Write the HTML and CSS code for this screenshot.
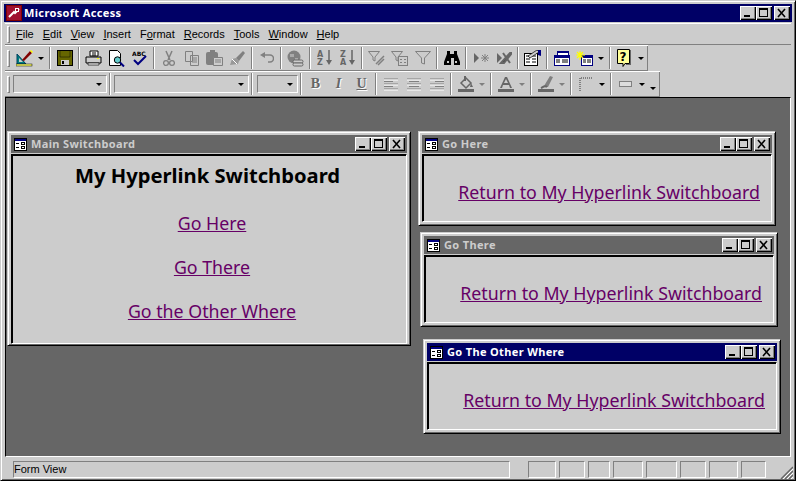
FILE: index.html
```html
<!DOCTYPE html>
<html lang="en">
<head>
    <meta charset="UTF-8">
    <title>Microsoft Access</title>
    <link rel="stylesheet" href="styles.css">
</head>
<body>
    <svg class="defs" width="0" height="0">
        <symbol id="form-icon" viewBox="0 0 13 13">
            <rect x="0" y="0" width="13" height="13" fill="#000"/>
            <rect x="1" y="1" width="11" height="2" fill="#000080"/>
            <rect x="1" y="3" width="11" height="9" fill="#fff"/>
            <path d="M2 5h3v1H2zM2 9h3v1H2z" fill="#000"/>
            <path d="M7 4h4v3H7zM7 8h4v3H7z" fill="#000"/>
            <path d="M8 5h2v1H8zM8 9h2v1H8z" fill="#fff"/>
        </symbol>
        <symbol id="min-glyph" viewBox="0 0 16 14"><rect x="4" y="9" width="6" height="2" fill="#000"/></symbol>
        <symbol id="max-glyph" viewBox="0 0 16 14"><path d="M3 2h9v9H3z M4 4v6h7V4z" fill="#000" fill-rule="evenodd"/></symbol>
        <symbol id="close-glyph" viewBox="0 0 16 14"><path d="M4 3l7 8M11 3l-7 8" stroke="#000" stroke-width="1.6" fill="none"/></symbol>
    </svg>

    <div class="app">
        <div class="titlebar active main-title">
            <svg class="app-icon" width="16" height="16" viewBox="0 0 16 16">
                <rect width="16" height="16" fill="#800000"/>
                <rect x="1" y="1" width="14" height="14" fill="#a01030"/>
                <path d="M3 12l5-5 1 1 4-4" stroke="#fff" stroke-width="2" fill="none"/>
                <rect x="9" y="3" width="4" height="4" fill="#fff"/>
                <rect x="10" y="4" width="2" height="2" fill="#a01030"/>
            </svg>
            <span class="title-text">Microsoft Access</span>
            <div class="caption-btns">
                <button class="cap"><svg width="16" height="14"><use href="#min-glyph"/></svg></button>
                <button class="cap"><svg width="16" height="14"><use href="#max-glyph"/></svg></button>
                <button class="cap close"><svg width="16" height="14"><use href="#close-glyph"/></svg></button>
            </div>
        </div>

        <div class="bar menubar">
            <span class="grip"></span>
            <span class="menu-item"><u>F</u>ile</span>
            <span class="menu-item"><u>E</u>dit</span>
            <span class="menu-item"><u>V</u>iew</span>
            <span class="menu-item"><u>I</u>nsert</span>
            <span class="menu-item">F<u>o</u>rmat</span>
            <span class="menu-item"><u>R</u>ecords</span>
            <span class="menu-item"><u>T</u>ools</span>
            <span class="menu-item"><u>W</u>indow</span>
            <span class="menu-item"><u>H</u>elp</span>
        </div>

        <div class="bar toolbar row-one">
            <span class="grip"></span>
            <span class="btn"><svg width="18" height="18" viewBox="0 0 18 18"><path d="M1 15L1 5l9 10z" fill="#008080" stroke="#004060"/><path d="M3 13V9l4 4z" fill="#ccc"/><rect x="0" y="15" width="16" height="2" fill="#ffff66" stroke="#000" stroke-width=".5"/><path d="M6 11l8-9 2 2-8 8z" fill="#800000"/><path d="M14 2l1-1 2 2-1 1z" fill="#ff0"/></svg></span>
            <span class="arrow"></span>
            <span class="sep"></span>
            <span class="btn"><svg width="16" height="16" viewBox="0 0 16 16"><rect x=".5" y=".5" width="15" height="15" fill="#666600" stroke="#000"/><path d="M3 1v6h10V1" fill="none" stroke="#000" stroke-opacity=".45"/><rect x="4" y="10" width="8" height="5" fill="#ccc"/><rect x="5" y="11" width="2" height="3" fill="#000"/></svg></span>
            <span class="sep"></span>
            <span class="btn"><svg width="17" height="16" viewBox="0 0 17 16"><path d="M5 1h8v5H5z" fill="#fff" stroke="#000"/><path d="M1 7h15v6H1z" fill="#ccc" stroke="#000"/><path d="M3 13h11v2H3z" fill="#fff" stroke="#000" stroke-width=".7"/><path d="M7 3h4M7 5h4" stroke="#000"/><rect x="12" y="8" width="2" height="1" fill="#ff0"/></svg></span>
            <span class="btn"><svg width="17" height="17" viewBox="0 0 17 17"><path d="M1.500.5h8l3 3v12h-11z" fill="#fff" stroke="#000"/><circle cx="9.500" cy="10" r="3.200" fill="#66cccc" stroke="#000"/><path d="M12 12.500l4 4" stroke="#000080" stroke-width="2"/></svg></span>
            <span class="btn"><svg width="16" height="16" viewBox="0 0 16 16"><text class="abc" x="0" y="6">ABC</text><path d="M2 10l4 4 8-8" stroke="#000080" stroke-width="2" fill="none"/></svg></span>
            <span class="sep"></span>
            <span class="btn"><svg width="12" height="17" viewBox="0 0 12 17"><path d="M3 1l4 9M9 1L5 10" stroke="#808080" stroke-width="1.500"/><circle cx="3" cy="13" r="2.400" fill="none" stroke="#808080" stroke-width="1.300"/><circle cx="9" cy="13" r="2.400" fill="none" stroke="#808080" stroke-width="1.300"/></svg></span>
            <span class="btn"><svg width="16" height="15" viewBox="0 0 16 15"><path d="M1.500.5h7v10h-7zM6.500 4.500h8v10h-8z" fill="#ccc" stroke="#808080"/><path d="M8 7h5M8 9h5M8 11h5" stroke="#808080"/></svg></span>
            <span class="btn"><svg width="17" height="16" viewBox="0 0 17 16"><rect x="0" y="2" width="12" height="13" rx="2" fill="#808080"/><rect x="4" y="0" width="5" height="3" fill="#808080"/><path d="M7.500 7.500h9v8h-9z" fill="#ccc" stroke="#808080"/><path d="M9 10h6M9 12h6" stroke="#808080"/></svg></span>
            <span class="btn"><svg width="17" height="16" viewBox="0 0 17 16"><path d="M1 15l2-6 4-1 3 3-1 3z" fill="#999"/><path d="M7 8l7-7 2 2-6 8z" fill="#808080"/><path d="M3 9l5 5" stroke="#fff"/></svg></span>
            <span class="sep"></span>
            <span class="btn"><svg width="14" height="12" viewBox="0 0 14 12"><path d="M4 3h6a3 3 0 0 1 0 7H8" fill="none" stroke="#808080" stroke-width="1.500"/><path d="M0 3l5-3v6z" fill="#808080"/></svg></span>
            <span class="sep"></span>
            <span class="btn"><svg width="17" height="17" viewBox="0 0 17 17"><circle cx="7" cy="7" r="6.500" fill="#808080"/><path d="M3 4h4v3H3zM8 8h3v3H8z" fill="#aaa"/><rect x="6" y="10" width="10" height="3" rx="1.500" fill="#ccc" stroke="#666"/><rect x="6" y="13" width="10" height="3" rx="1.500" fill="#ccc" stroke="#666"/></svg></span>
            <span class="sep"></span>
            <span class="btn"><svg width="16" height="16" viewBox="0 0 16 16"><text class="sort" x="0" y="7">A</text><text class="sort" x="0" y="15">Z</text><path d="M12 0v10" stroke="#666" stroke-width="1.500"/><path d="M9 10h6l-3 5z" fill="#666"/></svg></span>
            <span class="btn"><svg width="16" height="16" viewBox="0 0 16 16"><text class="sort" x="0" y="7">Z</text><text class="sort" x="0" y="15">A</text><path d="M12 0v10" stroke="#666" stroke-width="1.500"/><path d="M9 10h6l-3 5z" fill="#666"/></svg></span>
            <span class="sep"></span>
            <span class="btn"><svg width="17" height="15" viewBox="0 0 17 15"><path d="M.5.5h11L7 6v4L5 9V6z" fill="#ccc" stroke="#808080"/><path d="M8 13l8-8M10 14l6-6" stroke="#808080" stroke-width="1.500"/></svg></span>
            <span class="btn"><svg width="17" height="15" viewBox="0 0 17 15"><path d="M.5.5h11L7 6v4L5 9V6z" fill="#ccc" stroke="#808080"/><rect x="7.500" y="5.500" width="9" height="9" fill="#ccc" stroke="#808080"/><path d="M9 8h2v1H9zM13 8h2v1h-2zM9 11h2v1H9zM13 11h2v1h-2z" fill="#808080"/></svg></span>
            <span class="btn"><svg width="16" height="14" viewBox="0 0 16 14"><path d="M.5.5h15L9.500 7v6l-3-1V7z" fill="#ccc" stroke="#808080"/></svg></span>
            <span class="sep"></span>
            <span class="btn"><svg width="16" height="14" viewBox="0 0 16 14"><path d="M3 0h3v3h4V0h3v3l3 8v3h-6V7H9H7v7H0v-3l3-8z" fill="#000"/><path d="M3 10h2v2H3zM11 10h2v2h-2z" fill="#ccc"/></svg></span>
            <span class="sep"></span>
            <span class="btn"><svg width="16" height="12" viewBox="0 0 16 12"><path d="M1 1l5 5-5 5z" fill="#666"/><path d="M12 2v8M8 6h8M9 3l6 6M15 3l-6 6" stroke="#808080"/></svg></span>
            <span class="btn"><svg width="16" height="12" viewBox="0 0 16 12"><path d="M1 1l5 5-5 5z" fill="#666"/><path d="M5 11L14 1h2L8 11zM7 1l7 10" stroke="#666" stroke-width="2"/></svg></span>
            <span class="sep"></span>
            <span class="btn"><svg width="18" height="16" viewBox="0 0 18 16"><rect x=".5" y="3.500" width="13" height="12" fill="#fff" stroke="#000"/><path d="M2 6h4M8 6h4M2 9h4M8 9h4M2 12h4M8 12h4" stroke="#000"/><path d="M4 6l9-6 2 2-9 6z" fill="#ccc" stroke="#000" stroke-width=".7"/><path d="M14 0h3v6l-3-1z" fill="#000080"/></svg></span>
            <span class="sep"></span>
            <span class="btn"><svg width="16" height="15" viewBox="0 0 16 15"><path d="M3.500.5h11v4h-11z" fill="#fff" stroke="#000080"/><rect x="3" y="0" width="12" height="2" fill="#000080"/><rect x="0" y="4" width="16" height="11" fill="#000080"/><rect x="1" y="7" width="14" height="7" fill="#fff"/><path d="M2 9h4M8 9h6M2 11h4M8 11h6" stroke="#000"/></svg></span>
            <span class="btn"><svg width="17" height="15" viewBox="0 0 17 15"><rect x="5" y="4" width="12" height="11" fill="#000080"/><rect x="6" y="7" width="10" height="7" fill="#fff"/><path d="M7 9h3M11 9h4M7 11h3M11 11h4" stroke="#000"/><path d="M4 0v9M0 4h9M1 1l6 6M7 1L1 7" stroke="#ffff00" stroke-width="1.200"/></svg></span>
            <span class="arrow"></span>
            <span class="sep"></span>
            <span class="btn"><svg width="15" height="18" viewBox="0 0 15 18"><path d="M.5.5h12v14H8l-2 3v-3H.5z" fill="#ffff99" stroke="#000"/><path d="M13 1h1v15H9v-1h4z" fill="#666"/><text class="help" x="2.500" y="12">?</text></svg></span>
            <span class="arrow"></span>
        </div>

        <div class="bar toolbar row-two">
            <span class="grip"></span>
            <span class="combo font-style"><span class="arrow inner"></span></span>
            <span class="sep"></span>
            <span class="combo font-name"><span class="arrow inner"></span></span>
            <span class="sep"></span>
            <span class="combo font-size"><span class="arrow inner"></span></span>
            <span class="sep"></span>
            <span class="btn fmt"><b class="fmt-b">B</b></span>
            <span class="btn fmt"><i class="fmt-i">I</i></span>
            <span class="btn fmt"><u class="fmt-u">U</u></span>
            <span class="sep"></span>
            <span class="btn"><svg width="16" height="13" viewBox="0 0 16 13"><path d="M1 1h14M1 3.500h9M1 6h14M1 8.500h9M1 11h14" stroke="#808080"/><path d="M1 2h14M1 7h14M1 12h14" stroke="#fff"/></svg></span>
            <span class="btn"><svg width="16" height="13" viewBox="0 0 16 13"><path d="M1 1h14M3 3.500h10M1 6h14M3 8.500h10M1 11h14" stroke="#808080"/><path d="M1 2h14M1 7h14M1 12h14" stroke="#fff"/></svg></span>
            <span class="btn"><svg width="16" height="13" viewBox="0 0 16 13"><path d="M1 1h14M6 3.500h9M1 6h14M6 8.500h9M1 11h14" stroke="#808080"/><path d="M1 2h14M1 7h14M1 12h14" stroke="#fff"/></svg></span>
            <span class="sep"></span>
            <span class="btn"><svg width="16" height="16" viewBox="0 0 16 16"><path d="M3 7l5-5 5 5-5 5z" fill="#ccc" stroke="#666" stroke-width="1.500"/><path d="M6 0h2v5H6z" fill="#666"/><path d="M13 7l2 4h-3z" fill="#666"/><rect x="0" y="13" width="16" height="3" fill="#666"/></svg></span>
            <span class="arrow off"></span>
            <span class="sep"></span>
            <span class="btn"><svg width="16" height="16" viewBox="0 0 16 16"><path d="M2 12L7 1h2l5 11h-2l-1-3H5l-1 3zM6 7h4L8 3z" fill="#666" fill-rule="evenodd"/><rect x="0" y="13" width="16" height="3" fill="#666"/></svg></span>
            <span class="arrow off"></span>
            <span class="sep"></span>
            <span class="btn"><svg width="16" height="16" viewBox="0 0 16 16"><path d="M6 10l6-10 3 1-5 10z" fill="#808080"/><path d="M3 12c2-1 4-3 6-1" stroke="#666" stroke-width="2" fill="none"/><rect x="0" y="13" width="16" height="3" fill="#666"/></svg></span>
            <span class="arrow off"></span>
            <span class="sep"></span>
            <span class="btn"><svg width="14" height="14" viewBox="0 0 14 14"><path d="M1 14V1h13" fill="none" stroke="#808080" stroke-dasharray="1 1" stroke-width="2"/></svg></span>
            <span class="arrow"></span>
            <span class="sep"></span>
            <span class="btn"><svg width="13" height="6" viewBox="0 0 13 6"><rect x=".5" y=".5" width="12" height="5" fill="#ddd" stroke="#808080"/></svg></span>
            <span class="arrow"></span>
            <span class="arrow low"></span>
        </div>

        <div class="workspace">
            <section class="win main-win">
                <div class="titlebar">
                    <svg class="form-icon" width="13" height="13"><use href="#form-icon"/></svg>
                    <span class="title-text">Main Switchboard</span>
                    <div class="caption-btns">
                        <button class="cap"><svg width="16" height="14"><use href="#min-glyph"/></svg></button>
                        <button class="cap"><svg width="16" height="14"><use href="#max-glyph"/></svg></button>
                        <button class="cap close"><svg width="16" height="14"><use href="#close-glyph"/></svg></button>
                    </div>
                </div>
                <div class="win-body switchboard">
                    <h1>My Hyperlink Switchboard</h1>
                    <a href="#">Go Here</a>
                    <a href="#">Go There</a>
                    <a href="#">Go the Other Where</a>
                </div>
            </section>

            <section class="win here-win">
                <div class="titlebar">
                    <svg class="form-icon" width="13" height="13"><use href="#form-icon"/></svg>
                    <span class="title-text">Go Here</span>
                    <div class="caption-btns">
                        <button class="cap"><svg width="16" height="14"><use href="#min-glyph"/></svg></button>
                        <button class="cap"><svg width="16" height="14"><use href="#max-glyph"/></svg></button>
                        <button class="cap close"><svg width="16" height="14"><use href="#close-glyph"/></svg></button>
                    </div>
                </div>
                <div class="win-body return"><a href="#">Return to My Hyperlink Switchboard</a></div>
            </section>

            <section class="win there-win">
                <div class="titlebar">
                    <svg class="form-icon" width="13" height="13"><use href="#form-icon"/></svg>
                    <span class="title-text">Go There</span>
                    <div class="caption-btns">
                        <button class="cap"><svg width="16" height="14"><use href="#min-glyph"/></svg></button>
                        <button class="cap"><svg width="16" height="14"><use href="#max-glyph"/></svg></button>
                        <button class="cap close"><svg width="16" height="14"><use href="#close-glyph"/></svg></button>
                    </div>
                </div>
                <div class="win-body return"><a href="#">Return to My Hyperlink Switchboard</a></div>
            </section>

            <section class="win other-win">
                <div class="titlebar active">
                    <svg class="form-icon" width="13" height="13"><use href="#form-icon"/></svg>
                    <span class="title-text">Go The Other Where</span>
                    <div class="caption-btns">
                        <button class="cap"><svg width="16" height="14"><use href="#min-glyph"/></svg></button>
                        <button class="cap"><svg width="16" height="14"><use href="#max-glyph"/></svg></button>
                        <button class="cap close"><svg width="16" height="14"><use href="#close-glyph"/></svg></button>
                    </div>
                </div>
                <div class="win-body return"><a href="#">Return to My Hyperlink Switchboard</a></div>
            </section>
        </div>

        <div class="statusbar">
            <span class="panel status-text">Form View</span>
            <span class="panel p28"></span>
            <span class="panel p26"></span>
            <span class="panel p22"></span>
            <span class="panel p30"></span>
            <span class="panel p31"></span>
            <span class="panel p26"></span>
            <span class="panel p29"></span>
            <span class="panel p25"></span>
            <svg class="size-grip" width="13" height="13" viewBox="0 0 13 13"><path d="M13 1L1 13M13 5l-8 8M13 9l-4 4" stroke="#666" stroke-width="1.500"/><path d="M13 3L3 13M13 7l-6 6M13 11l-2 2" stroke="#fff"/></svg>
        </div>
    </div>
</body>
</html>
```

FILE: styles.css
```css
html, body {
    margin: 0;
    padding: 0;
    height: 100%;
    overflow: hidden;
    background: #ccc;
    font-family: "Noto Sans", sans-serif;
    font-size: 11px;
    color: #000;
}

.defs {
    position: absolute;
}

.app {
    box-sizing: border-box;
    width: 796px;
    height: 481px;
    padding: 2px 4px 0 4px;
    display: flex;
    flex-direction: column;
    background: #ccc;
    border: 1px solid;
    border-color: #ccc #000 #000 #ccc;
    box-shadow: inset 1px 1px 0 #fff, inset -1px -1px 0 #666;
}

/* title bars */
.titlebar {
    height: 18px;
    flex: none;
    display: flex;
    align-items: center;
    background: #666;
    color: #ccc;
    font-weight: bold;
    font-size: 11px;
    padding: 0 2px;
}

.titlebar.active {
    background: #006;
    color: #fff;
}

.title-text {
    letter-spacing: .35px;
    margin-bottom: 2px;
}

.main-title {
    margin: 1px -1px 1px -1px;
}

.app-icon {
    margin-right: 2px;
}

.form-icon {
    margin: 0 4px 0 1px;
}

.caption-btns {
    margin-left: auto;
    display: flex;
}

.cap {
    box-sizing: border-box;
    width: 16px;
    height: 14px;
    padding: 0;
    border: 0;
    background: #ccc;
    box-shadow: inset 1px 1px 0 #fff, inset -1px -1px 0 #000, inset -2px -2px 0 #808080;
    display: block;
}

.cap svg {
    display: block;
}

.cap.close {
    margin-left: 2px;
}

/* menu and toolbars */
.bar {
    display: flex;
    align-items: center;
    flex: none;
    box-sizing: border-box;
    border-top: 1px solid #fff;
    border-bottom: 1px solid #808080;
}

.menubar {
    height: 22px;
    padding-left: 2px;
}

.menu-item {
    margin-right: 9px;
    font-family: "Liberation Sans", sans-serif;
    font-size: 11px;
}

.grip {
    box-sizing: border-box;
    width: 3px;
    height: 17px;
    border: 1px solid;
    border-color: #fff #808080 #808080 #fff;
    margin-right: 3px;
    flex: none;
}

.menubar .grip {
    margin-right: 6px;
}

.toolbar {
    height: 26px;
    padding-left: 2px;
    box-shadow: inset -1px 0 0 #808080;
}

.row-one {
    width: 643px;
}

.row-two {
    width: 655px;
}

.btn {
    width: 23px;
    height: 22px;
    flex: none;
    display: flex;
    align-items: center;
    justify-content: center;
}

.arrow {
    width: 11px;
    height: 12px;
    flex: none;
    position: relative;
}

.arrow::after {
    content: "";
    position: absolute;
    left: 2px;
    top: 5px;
    border-style: solid;
    border-width: 3px 3.500px 0;
    border-color: #000 transparent transparent;
}

.arrow.off::after {
    border-top-color: #808080;
}

.arrow.low::after {
    top: 9px;
}

.sep {
    box-sizing: border-box;
    width: 2px;
    height: 22px;
    margin: 0 2px;
    flex: none;
    border-left: 1px solid #808080;
    border-right: 1px solid #fff;
}

.combo {
    box-sizing: border-box;
    height: 18px;
    flex: none;
    border: 1px solid;
    border-color: #808080 #fff #fff #808080;
    position: relative;
}

.combo .inner {
    position: absolute;
    right: 1px;
    top: 2px;
}

.font-style {
    width: 94px;
}

.font-name {
    width: 135px;
    margin-left: 1px;
}

.font-size {
    width: 41px;
    margin-left: 2px;
}

.fmt {
    font-family: "Liberation Serif", serif;
    font-size: 14px;
    color: #666;
    font-weight: bold;
    text-shadow: 1px 1px 0 #fff;
}

.abc {
    font: bold 6px "DejaVu Sans", sans-serif;
    fill: #000;
}

.sort {
    font: bold 8px "DejaVu Sans", sans-serif;
    fill: #666;
}

.help {
    font: bold 12px "DejaVu Sans", sans-serif;
    fill: #000;
}

/* the document area */
.workspace {
    flex: 1;
    position: relative;
    background: #666;
    border: 1px solid;
    border-color: #000 #fff #fff #000;
}

.win {
    position: absolute;
    box-sizing: border-box;
    display: flex;
    flex-direction: column;
    padding: 3px;
    background: #ccc;
    border: 1px solid;
    border-color: #ccc #000 #000 #ccc;
    box-shadow: inset 1px 1px 0 #fff, inset -1px -1px 0 #666;
}

.main-win {
    left: 1px;
    top: 33px;
    width: 404px;
    height: 215px;
}

.here-win {
    left: 412px;
    top: 33px;
    width: 358px;
    height: 95px;
}

.there-win {
    left: 414px;
    top: 134px;
    width: 358px;
    height: 95px;
}

.other-win {
    left: 417px;
    top: 241px;
    width: 358px;
    height: 95px;
}

.win-body {
    flex: 1;
    margin-top: 1px;
    background: #ccc;
    border: 1px solid;
    border-color: #000 #fff #fff #000;
    box-shadow: inset 1px 1px 0 #000;
}

.win-body a {
    color: #606;
    font-size: 17.800px;
    line-height: 24px;
}

.switchboard {
    display: flex;
    flex-direction: column;
    align-items: center;
    padding-top: 7px;
}

.switchboard h1 {
    margin: 0 3px 23px 0;
    font-size: 20.200px;
    line-height: 26px;
    font-weight: bold;
}

.switchboard a {
    margin-bottom: 20px;
    margin-left: 6px;
}

.return {
    display: flex;
    justify-content: flex-end;
    padding: 25px 11px 0 0;
}

/* status bar */
.statusbar {
    height: 22px;
    padding: 1px 0 0 8px;
    flex: none;
    display: flex;
    align-items: center;
    font-family: "Liberation Sans", sans-serif;
    font-size: 11px;
    position: relative;
}

.panel {
    box-sizing: border-box;
    height: 17px;
    line-height: 15px;
    border: 1px solid;
    border-color: #808080 #fff #fff #808080;
    margin-right: 3px;
    flex: none;
}

.status-text {
    width: 497px;
    margin-right: 18px;
}

.p28 { width: 28px; }
.p26 { width: 26px; }
.p22 { width: 22px; }
.p30 { width: 30px; }
.p31 { width: 31px; }
.p29 { width: 29px; }
.p25 { width: 25px; }

.size-grip {
    position: absolute;
    right: -2px;
    bottom: 1px;
}
```
